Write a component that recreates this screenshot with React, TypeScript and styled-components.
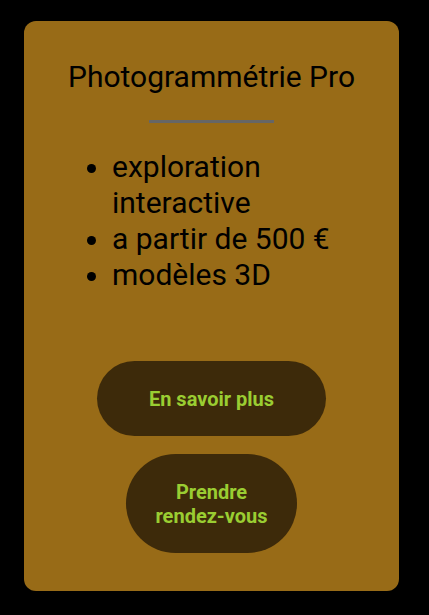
import * as React from "react";
import styled, { createGlobalStyle } from "styled-components";

const GlobalStyle = createGlobalStyle`
  html, body {
    margin: 0;
    padding: 0;
    background: #000;
    font-family: Roboto, "Liberation Sans", sans-serif;
  }
`;

const Page = styled.div`
  padding: 21px 30px 24px 24px;
`;

const Card = styled.section`
  width: 375px;
  height: 570px;
  box-sizing: border-box;
  background: #986b17;
  border-radius: 12px;
  display: flex;
  flex-direction: column;
  align-items: center;
  padding: 38px 0 0;
`;

const Title = styled.h2`
  margin: 0;
  font-size: 30px;
  font-weight: 400;
  line-height: 36px;
  color: #000;
`;

const Divider = styled.hr`
  width: 125px;
  height: 3px;
  margin: 25px 0 0;
  border: 0;
  background: #666;
`;

const FeatureList = styled.ul`
  align-self: stretch;
  margin: 26px 0 0;
  padding: 0 30px 0 88px;
  font-size: 30px;
  line-height: 36px;
  color: #000;
`;

const Feature = styled.li``;

const Actions = styled.div`
  display: flex;
  flex-direction: column;
  align-items: center;
  gap: 18px;
  margin-top: 68px;
`;

const PillButton = styled.button<{ $width: number }>`
  width: ${({ $width }) => $width}px;
  box-sizing: border-box;
  padding: 26px 20px 25px;
  border: 0;
  border-radius: 999px;
  background: #3d2a0a;
  color: #9acd32;
  font-family: Roboto, "Liberation Sans", sans-serif;
  font-size: 20px;
  font-weight: 700;
  line-height: 24px;
  cursor: pointer;
`;

const App: React.FunctionComponent = () => {
  return (
    <Page>
      <GlobalStyle />
      <Card>
        <Title>Photogrammétrie Pro</Title>
        <Divider />
        <FeatureList>
          <Feature>exploration interactive</Feature>
          <Feature>a partir de 500 €</Feature>
          <Feature>modèles 3D</Feature>
        </FeatureList>
        <Actions>
          <PillButton $width={229}>En savoir plus</PillButton>
          <PillButton $width={171}>Prendre rendez-vous</PillButton>
        </Actions>
      </Card>
    </Page>
  );
};

export default App;
